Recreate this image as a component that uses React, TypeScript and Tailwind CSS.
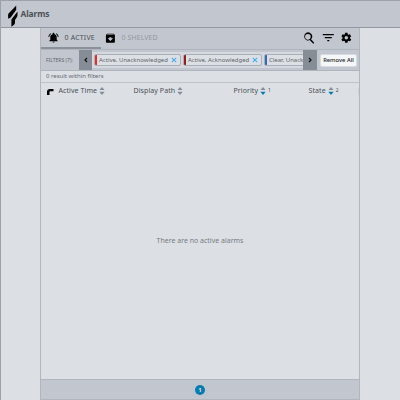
import React from "react";

function Sort({ active = false }: { active?: boolean }) {
  return (
    <svg className="ml-[2px] mb-[1px] h-[8px] w-[6px] shrink-0" viewBox="0 0 6 8">
      <path d="M3 0 5.500 2.900H.5Z" fill="#858c98" />
      <path d="M3 7.900 5.700 4.800H.3Z" fill={active ? "#087cad" : "#858c98"} />
    </svg>
  );
}

function Chip({ label, bar, text, width }: { label: string; bar: string; text: string; width: string }) {
  return (
    <div className={`flex h-[12px] shrink-0 items-center overflow-hidden rounded-[2px] border border-[#a9afb7] bg-[#dce0e5] ${width}`}>
      <span className={`h-full w-[2px] shrink-0 ${bar}`} />
      <span className={`ml-[2px] shrink-0 whitespace-nowrap text-[6px] leading-[10px] text-[#60656c] ${text}`}>{label}</span>
      <svg className="ml-[3px] h-[6px] w-[6px] shrink-0" viewBox="0 0 6 6">
        <path d="M.8.8 5.200 5.200M5.200.8.8 5.200" stroke="#45aee8" strokeWidth="1.100" />
      </svg>
    </div>
  );
}

export default function App() {
  return (
    <div className="flex h-[400px] w-[400px] flex-col overflow-hidden border-l border-t border-[#9ca2ac] bg-[#dce0e5] font-['Noto_Sans',sans-serif] text-[#4b5057]">
      <header className="flex h-[27px] shrink-0 items-center border-b border-[#9297a2] bg-[#c2c7cf]">
        <svg className="ml-[6px] mt-[4px] h-[22px] w-[11px] shrink-0" viewBox="0 0 11 22">
          <path d="M9.200.5v4.200L3.700 12.500 1.100 13.800V10.300c0-.8.2-1.400.7-2Z" />
          <path d="M10.500 6.500v3.800c0 .8-.2 1.300-.7 2L8 15v2.500c0 .8-.2 1.400-.7 2L4.400 21.800V14.600Z" />
        </svg>
        <h1 className="ml-[2.500px] text-[8.400px] font-bold leading-[12px] tracking-[-0.1px]">Alarms</h1>
      </header>
      <main className="ml-[39px] flex min-h-0 w-[320px] grow flex-col border-x border-[#b1b6bc]">
        <nav className="flex h-[21px] shrink-0 bg-[#c2c7cf]">
          <div className="flex h-full w-[60px] items-center border-b-2 border-[#8b919c] pl-[7px]">
            <svg className="h-[12px] w-[11px] shrink-0" viewBox="0 0 24 24">
              <path d="M12 22a2.300 2.300 0 0 0 2.300-2H9.700a2.300 2.300 0 0 0 2.300 2Zm7-6v-5.500c0-3.200-1.700-5.800-4.800-6.500V3a2.200 2.200 0 0 0-4.400 0v1C6.700 4.700 5 7.300 5 10.500V16l-2 2v1h18v-1ZM6.600 3.100 5.200 1.700A11 11 0 0 0 .7 10h2a9 9 0 0 1 3.900-6.900Zm12.200-1.400-1.400 1.400a9 9 0 0 1 3.900 6.900h2a11 11 0 0 0-4.500-8.300Z" />
            </svg>
            <span className="ml-[5.500px] whitespace-nowrap text-[7px] leading-[10px] tracking-[0.18px]">0 ACTIVE</span>
          </div>
          <div className="flex items-center pl-[3px] pb-[2px] text-[#9297a0]">
            <svg className="h-[12px] w-[12px]" viewBox="0 0 24 24" fill="#000">
              <path fillRule="evenodd" d="m20.500 5.200-1.400-1.700C18.900 3.200 18.500 3 18 3H6c-.5 0-.9.2-1.200.5L3.500 5.200C3.200 5.600 3 6 3 6.500V19a2 2 0 0 0 2 2h14a2 2 0 0 0 2-2V6.500c0-.5-.2-.9-.5-1.300ZM12 17.500 6.500 12H10v-2h4v2h3.500ZM5.100 5l.8-1h12l.9 1Z" transform="translate(.8 .3)" />
            </svg>
            <span className="ml-[5.500px] whitespace-nowrap text-[7px] leading-[10px] tracking-[0.08px]">0 SHELVED</span>
          </div>
          <div className="ml-auto flex items-center gap-[6px] pr-[7px] pb-[1px]">
            <svg className="mt-[1px] h-[15px] w-[15px]" viewBox="0 0 24 24"><path d="M15.500 14h-.79l-.28-.27A6.500 6.500 0 1 0 13 14.710l.27.28v.79l5 4.990L19.760 19.280ZM9.500 14a4.500 4.500 0 1 1 0-9 4.500 4.500 0 0 1 0 9Z" transform="translate(1.500 -.2)" /></svg>
            <svg className="h-[12px] w-[12px]" viewBox="0 0 24 24"><path d="M1 4h22v2.500H1Zm4 6h14v2.500H5Zm5 6h4v2.500h-4Z" transform="translate(.6 0)" /></svg>
            <svg className="h-[12px] w-[12px]" viewBox="0 0 24 24"><path fillRule="evenodd" d="m19.400 13 .1-1-.1-1 2.100-1.700c.2-.1.2-.4.1-.6l-2-3.500c-.1-.2-.4-.3-.6-.2l-2.500 1a7 7 0 0 0-1.700-1l-.4-2.600c0-.2-.2-.4-.5-.4h-4c-.2 0-.4.2-.5.4L9.100 5c-.6.2-1.200.6-1.700 1l-2.500-1c-.2-.1-.5 0-.6.2l-2 3.500c-.1.2-.1.5.1.6L4.500 11l-.1 1 .1 1-2.100 1.700c-.2.1-.2.4-.1.6l2 3.500c.1.2.4.3.6.2l2.500-1c.5.4 1.100.7 1.700 1l.4 2.600c0 .2.2.4.5.4h4c.2 0 .4-.2.5-.4l.4-2.600c.6-.2 1.200-.6 1.700-1l2.500 1c.2.100.5 0 .6-.2l2-3.500c.1-.2.1-.5-.1-.6ZM12 15.500a3.500 3.500 0 1 1 0-7 3.500 3.500 0 0 1 0 7Z" transform="translate(.6 -.4)" /></svg>
          </div>
        </nav>
        <section className="flex h-[22px] shrink-0 items-center border-b border-t border-[#b0b5bd] bg-[#c2c7cf]">
          <span className="w-[38px] shrink-0 whitespace-nowrap pl-[5px] text-[5px] leading-[10px] text-[#60656c]">FILTERS (7):</span>
          <button className="flex h-full w-[13px] shrink-0 items-center justify-center bg-[#878d97] pl-[1px]">
            <svg className="h-[6px] w-[6px]" viewBox="0 0 6 6" fill="none" stroke="#111" strokeWidth="1.200"><path d="M4 1 2 3l2 2" /></svg>
          </button>
          <div className="flex h-[16px] w-[211px] shrink-0 items-center gap-[2px] overflow-hidden bg-[#d5d9df] pl-[2px]">
            <Chip label="Active, Unacknowledged" bar="bg-[#e32d2d]" text="w-[69px]" width="w-[87px]" />
            <Chip label="Active, Acknowledged" bar="bg-[#971b1b]" text="w-[61px]" width="w-[79px]" />
            <Chip label="Clear, Unacknowledged" bar="bg-[#3468bd]" text="w-[69px]" width="w-[87px]" />
          </div>
          <button className="flex h-full w-[14px] shrink-0 items-center justify-center bg-[#878d97]">
            <svg className="h-[6px] w-[6px]" viewBox="0 0 6 6" fill="none" stroke="#111" strokeWidth="1.200"><path d="m2 1 2 2-2 2" /></svg>
          </button>
          <button className="ml-[3px] flex h-[13px] w-[37px] shrink-0 items-center justify-center whitespace-nowrap rounded-[2px] border border-[#d7dade] bg-[#f5f6f7] text-[5.800px] font-medium leading-[9px] text-[#222]">Remove All</button>
        </section>
        <div className="h-[12px] shrink-0 border-b border-[#bfc4ca] pl-[5px] text-[6px] leading-[11px] text-[#656a71]">0 result within filters</div>
        <div className="flex h-[16px] shrink-0 items-center text-[7px] leading-[10px] tracking-[0.08px]">
          <div className="flex w-[87px] items-center pl-[6px]">
            <svg className="mt-[2px] h-[7px] w-[7px]" viewBox="0 0 7 7"><path d="M0 6V3Q0 0 3 0H6.500v2.200H3.300Q2.500 2.200 2.500 3v3Z" /></svg>
            <span className="ml-[4px] whitespace-nowrap pl-[0.5px]">Active Time</span><Sort />
          </div>
          <div className="flex w-[100px] items-center pl-[5.500px]"><span className="whitespace-nowrap">Display Path</span><Sort /></div>
          <div className="flex w-[75px] items-center pl-[5.500px]"><span>Priority</span><Sort active /><span className="ml-[2px] mb-[3px] text-[5px]">1</span></div>
          <div className="flex items-center pl-[5.500px]"><span>State</span><Sort active /><span className="ml-[2px] mb-[3px] text-[5px]">2</span></div>
          <span className="ml-auto h-[7px] w-px bg-[#cfd3d9]" />
        </div>
        <div className="flex grow items-center justify-center pt-[3px] text-[7px] leading-[10px] text-[#777c83]">There are no active alarms</div>
        <footer className="flex h-[21px] shrink-0 items-center justify-center border-y border-[#b1b6bc] bg-[#c2c7cf]">
          <span className="flex h-[10px] w-[10px] items-center justify-center rounded-full bg-[#087cb0] text-[6px] font-bold leading-none text-[#dce0e5]">1</span>
        </footer>
      </main>
    </div>
  );
}
